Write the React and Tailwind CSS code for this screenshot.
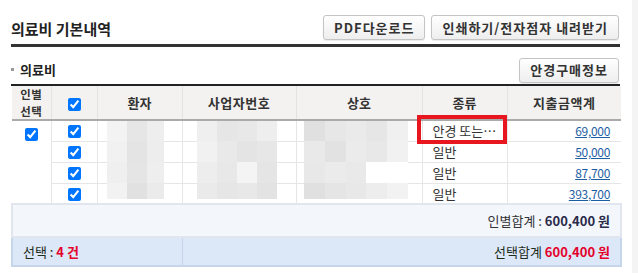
import React from 'react';

const rows = [
  { kind: '안경 또는…', amount: '69,000' },
  { kind: '일반', amount: '50,000' },
  { kind: '일반', amount: '87,700' },
  { kind: '일반', amount: '393,700' },
];

const mosaics = [
  {
    cls: 'left-[96px] w-[57px] grid-cols-[20px_20px_17px]',
    cells: ['#f3f3f3', '#e6e6e6', '#eeeeee', '#f1f1f1', '#e4e4e4', '#ededed', '#efefef', '#e5e5e5', '#eeeeee', '#f2f2f2', '#e1e1e1', '#ebebeb'],
  },
  {
    cls: 'left-[186px] w-[80px] grid-cols-4',
    cells: ['#efefef', '#e6e6e6', '#e8e8e8', '#eeeeee', '#f1f1f1', '#e9e9e9', '#e4e4e4', '#e7e7e7', '#ededed', '#e8e8e8', '#f4f4f4', '#e5e5e5', '#eaeaea', '#e6e6e6', '#e8e8e8', '#e3e3e3'],
  },
  {
    cls: 'left-[293px] w-[104px] grid-cols-5',
    cells: ['#e0e0e0', '#e7e7e7', '#eaeaea', '#e6e6e6', '#f0f0f0', '#e9e9e9', '#e2e2e2', '#ebebeb', '#e8e8e8', '#f1f1f1', '#e8e8e8', '#ebebeb', '#e9e9e9', '#ffffff', '#ffffff', '#e0e0e0', '#e5e5e5', '#e8e8e8', '#ededed', '#f2f2f2'],
  },
];

function Btn({ children }) {
  return (
    <button className="h-[25px] px-[10px] rounded-[3px] border border-[#c4c4c4] bg-gradient-to-b from-white to-[#eeeeee] text-[13px] font-bold text-[#333] tracking-[1px] shadow-[0_1px_1px_rgba(0,0,0,0.08)]">
      {children}
    </button>
  );
}

function Check() {
  return <input type="checkbox" checked readOnly className="w-[13px] h-[13px] m-0 accent-[#0075ff] align-middle" />;
}

export default function App() {
  return (
    <div className="flex h-[273px] overflow-hidden bg-white text-[#333]" style={{ fontFamily: '"Noto Sans CJK KR", "Noto Sans", sans-serif' }}>
      <div className="ml-[11px] w-[609px] flex flex-col">
        <header className="mt-[15px] h-[25px] flex items-center justify-between">
          <h1 className="text-[15px] font-bold text-[#222] leading-none mt-[2px]">의료비 기본내역</h1>
          <div className="flex gap-[6px] mr-[1px]">
            <Btn>PDF다운로드</Btn>
            <Btn>인쇄하기/전자점자 내려받기</Btn>
          </div>
        </header>
        <div className="mt-[4px] h-[3px] bg-[#333]" />

        <div className="mt-[10px] h-[25px] flex items-center justify-between">
          <div className="flex items-center gap-[6px]">
            <span className="w-[3px] h-[3px] bg-[#999]" />
            <span className="text-[13px] font-bold text-[#222] leading-none">의료비</span>
          </div>
          <div className="mr-[1px]">
            <Btn>안경구매정보</Btn>
          </div>
        </div>
        <div className="mt-[2px] h-[2px] bg-[#222]" />

        <div className="relative">
          <table className="w-full border-collapse table-fixed text-[13px]">
            <colgroup>
              <col className="w-[39px]" />
              <col className="w-[46px]" />
              <col className="w-[85px]" />
              <col className="w-[114px]" />
              <col className="w-[126px]" />
              <col className="w-[85px]" />
              <col className="w-[114px]" />
            </colgroup>
            <thead className="bg-[#f3f2f0] font-bold text-[#333]">
              <tr className="h-[33px] border-b-2 border-[#aaaaaa]">
                <th className="border-r border-[#e3e3e3] font-bold text-[11.4px] leading-[16.5px] tracking-[0.5px]">
                  <div>인별</div>
                  <div>선택</div>
                </th>
                <th className="border-r border-[#e3e3e3]"><Check /></th>
                <th className="border-r border-[#e3e3e3] font-bold">환자</th>
                <th className="border-r border-[#e3e3e3] font-bold tracking-[0.5px]">사업자번호</th>
                <th className="border-r border-[#e3e3e3] font-bold">상호</th>
                <th className="border-r border-[#e3e3e3] font-bold">종류</th>
                <th className="font-bold tracking-[0.5px]">지출금액계</th>
              </tr>
            </thead>
            <tbody>
              {rows.map((r, i) => (
                <tr key={i} className="h-[21px] border-b border-[#e6e6e6]">
                  {i === 0 && (
                    <td rowSpan={4} className="align-top text-center pt-[2px] border-r border-[#e6e6e6]"><Check /></td>
                  )}
                  <td className="text-center border-r border-[#e6e6e6] leading-none"><Check /></td>
                  <td className="border-r border-[#e6e6e6]" />
                  <td className="border-r border-[#e6e6e6]" />
                  <td className="border-r border-[#e6e6e6]" />
                  <td className="border-r border-[#e6e6e6] pl-[10px] leading-none">{r.kind}</td>
                  <td className="text-right pr-[11px] leading-none">
                    <a className="underline text-[#1d5ea3] text-[12px] tracking-[-0.3px]">{r.amount}</a>
                  </td>
                </tr>
              ))}
              <tr className="h-[33px] bg-[#f3f6fb] border-2 border-[#e1e6ee]">
                <td colSpan={7} className="text-right pr-[10px]">
                  인별합계 : <span className="font-bold text-[#2a2a4a]">600,400 원</span>
                </td>
              </tr>
              <tr className="h-[29px] bg-[#dce7f7] border-2 border-[#c6d5ea]">
                <td colSpan={3} className="pl-[10px] border-r border-[#c6d5ea] text-[#1e2e1e]">
                  선택 : <span className="font-bold text-[#e4002b]">4 건</span>
                </td>
                <td colSpan={4} className="text-right pr-[10px] text-[#1e2e1e]">
                  선택합계 <span className="font-bold text-[#e4002b]">600,400 원</span>
                </td>
              </tr>
            </tbody>
          </table>

          {mosaics.map((m, i) => (
            <div key={i} className={`absolute top-[35px] h-[78px] grid grid-rows-[20px_21px_21px_16px] ${m.cls}`}>
              {m.cells.map((c, j) => (
                <div key={j} style={{ background: c }} />
              ))}
            </div>
          ))}

          <div className="absolute left-[406px] top-[29px] w-[90px] h-[29px] border-[4px] border-[#e8161f]" />
        </div>
      </div>
      <div className="ml-auto w-[6px] bg-[#f4f4f4]" />
    </div>
  );
}
